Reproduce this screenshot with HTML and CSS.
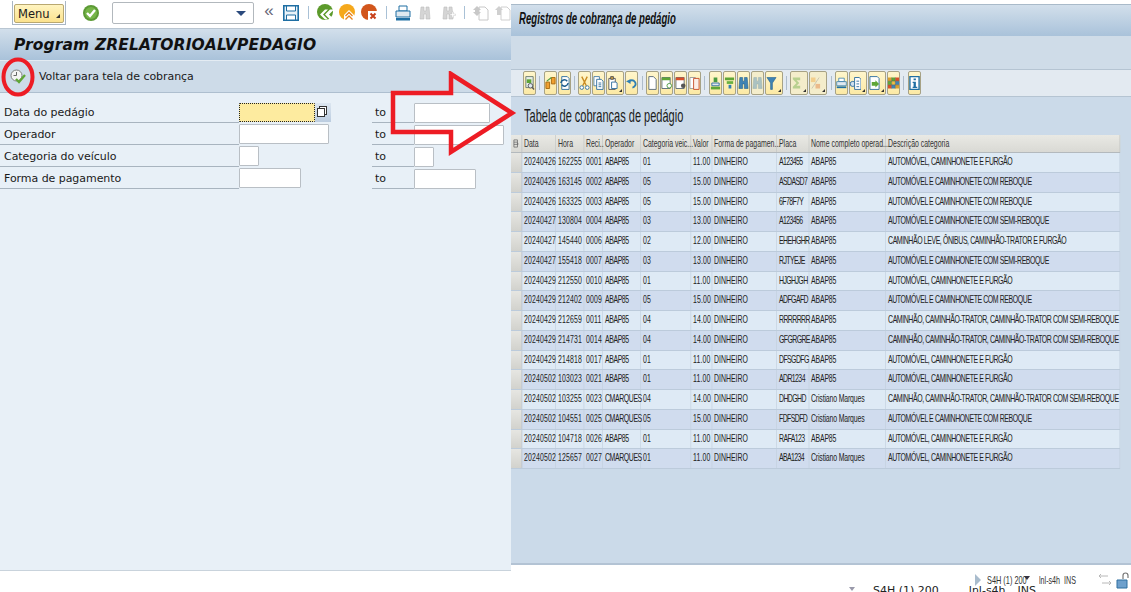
FILE: index.html
```html
<!DOCTYPE html>
<html lang="pt">
<head>
<meta charset="utf-8">
<title>Registros de cobrança de pedágio</title>
<link rel="stylesheet" href="styles.css">
</head>
<body>
<svg class="defs" width="0" height="0" aria-hidden="true">
  <defs>
    <symbol id="i-doc" viewBox="0 0 12 16"><path d="M2 1h5l3 3v11H2z" fill="#fff" stroke="#5a6a78"/></symbol>
    <symbol id="i-docs" viewBox="0 0 12 16"><path d="M1 1h6v10H1z" fill="#fff" stroke="#4b7fa8"/><path d="M4 4h5l2 2v9H4z" fill="#fff" stroke="#2f6f9f"/><path d="M6 8h3M6 10h3M6 12h3" stroke="#2f6f9f"/></symbol>
    <symbol id="i-bino" viewBox="0 0 12 16"><path d="M2 2h3v4h2V2h3l1 12H7V9H5v5H1z" fill="#3f83b4" stroke="#1c5c8c" stroke-width=".6"/></symbol>
  </defs>
</svg>

<main class="page">
  <section class="left">
    <header class="sys">
      <div class="menu-wrap"><button class="menu">Menu<i class="tri"></i></button></div>
      <svg class="okic" viewBox="0 0 18 18"><circle cx="9" cy="9" r="8" fill="#5c9a35"/><circle cx="9" cy="9" r="6" fill="#76b548"/><path d="M5 9l3 3 5-6" fill="none" stroke="#fff" stroke-width="2.4"/></svg>
      <div class="cmd"><i class="cmd-tri"></i></div>
      <span class="chev">«</span>
      <svg class="ic16 save" viewBox="0 0 16 16"><path d="M.8.8h14.4v14.4H.8z" fill="#eaf3f9" stroke="#1f6fa3" stroke-width="1.6"/><path d="M3.5 1v5h9V1z" fill="#fff" stroke="#1f6fa3"/><path d="M3.5 15v-5h9v5z" fill="#fff" stroke="#1f6fa3"/></svg>
      <i class="sep s1"></i>
      <svg class="ic18" viewBox="0 0 18 18"><circle cx="8" cy="8" r="8" fill="#5c9a2b"/><path d="M17 5.5l-5 5 5 5h-4l-5-5 5-5zM11 5.5l-5 5 5 5H8l-5-5 5-5z" fill="#fff"/></svg>
      <svg class="ic18" viewBox="0 0 18 18"><circle cx="8" cy="8" r="8" fill="#f5a81c"/><path d="M5 17V11l5-5 5 5v6z" fill="#fff"/><path d="M6.5 12l3.5-3.5 3.5 3.5M6.5 15.500l3.500-3.500 3.500 3.500" fill="none" stroke="#e8821b" stroke-width="1.300"/></svg>
      <svg class="ic18" viewBox="0 0 18 18"><circle cx="8" cy="8" r="8" fill="#d2561c"/><rect x="7" y="7" width="10" height="10" fill="#fff"/><path d="M9.500 9.500l5 5M14.500 9.500l-5 5" stroke="#c8401a" stroke-width="2"/></svg>
      <i class="sep s2"></i>
      <svg class="ic16 print" viewBox="0 0 16 16"><path d="M4 1h8v5H4z" fill="#fff" stroke="#1f6fa3"/><path d="M1 6h14v6H1z" fill="#dfe9f0" stroke="#1f6fa3"/><path d="M1 13h14v2.500H1z" fill="#1f6fa3"/></svg>
      <svg class="ic16 find" viewBox="0 0 12 16"><path d="M2 2h3v4h2V2h3l1 12H7V9H5v5H1z" fill="#d5d5d5" stroke="#bdbdbd" stroke-width=".6"/></svg>
      <svg class="ic16 find" viewBox="0 0 12 16"><path d="M2 2h3v4h2V2h3l1 12H7V9H5v5H1z" fill="#d5d5d5" stroke="#bdbdbd" stroke-width=".6"/><path d="M8 9h2V7h1.500v2h2v1.500h-2v2H10v-2H8z" fill="#fff" stroke="#bdbdbd" stroke-width=".4"/></svg>
      <i class="sep s3"></i>
      <svg class="ic16 page-ic" viewBox="0 0 16 16"><path d="M6 2h6l3 3v10H6z" fill="#fff" stroke="#c8c8c8"/><path d="M4 1l4 4H6v2h2l-4 4-4-4h2V5H0z" fill="#c8c8c8"/></svg>
      <svg class="ic16 page-ic" viewBox="0 0 16 16"><path d="M6 2h6l3 3v10H6z" fill="#fff" stroke="#d0d0d0"/><path d="M4 1l4 4H6v5H2V5H0z" fill="#d0d0d0"/></svg>
    </header>
    <h1 class="prog">Program ZRELATORIOALVPEDAGIO</h1>
    <div class="apptool">
      <svg class="clockic" viewBox="0 0 16 16"><circle cx="6.500" cy="6.500" r="5.500" fill="#f4f4f4" stroke="#7d7d7d"/><path d="M6.500 3v3.500H3.500" fill="none" stroke="#666"/><path d="M6 10l3 3 6-7" fill="none" stroke="#5fa636" stroke-width="2.300"/></svg>
      <span>Voltar para tela de cobrança</span>
    </div>
    <form class="form">
      <div class="frow">
        <label class="flabel">Data do pedágio</label>
        <div class="low"><span class="inp focus"></span><span class="hlp"><i></i></span></div>
        <span class="to">to</span>
        <span class="inp w76"></span>
      </div>
      <div class="frow">
        <label class="flabel">Operador</label>
        <div class="low"><span class="inp w90"></span></div>
        <span class="to">to</span>
        <span class="inp w90"></span>
      </div>
      <div class="frow">
        <label class="flabel">Categoria do veículo</label>
        <div class="low"><span class="inp w20"></span></div>
        <span class="to">to</span>
        <span class="inp w20"></span>
      </div>
      <div class="frow">
        <label class="flabel">Forma de pagamento</label>
        <div class="low"><span class="inp w62"></span></div>
        <span class="to">to</span>
        <span class="inp w62"></span>
      </div>
    </form>
    <footer class="lfoot"></footer>
  </section>

  <section class="right">
    <h2 class="rtitle"><span>Registros de cobrança de pedágio</span></h2>
    <div class="band"></div>
    <div class="tools">
      <button class="tb"><svg viewBox="0 0 12 16"><path d="M2 1h8v12H2z" fill="#e8efe8" stroke="#6a7a70"/><path d="M3 4h5v4H3z" fill="#5fa636"/><circle cx="7" cy="11" r="2.500" fill="#dfe9f0" stroke="#555"/><path d="M9 13l2 2" stroke="#555" stroke-width="1.500"/></svg></button>
      <i class="tsep"></i>
      <button class="tb"><svg viewBox="0 0 12 16"><path d="M1 7h4v7H1z" fill="#f0a030" stroke="#a86a10"/><path d="M7 2h4v7H7z" fill="#f0a030" stroke="#a86a10"/><path d="M2 6l5-4" stroke="#4a9a40" stroke-width="1.200"/></svg></button>
      <button class="tb"><svg viewBox="0 0 12 16"><path d="M3 1h6l2 2v12H3z" fill="#fff" stroke="#2f6f9f"/><path d="M2 8a4 4 0 0 1 7-2M10 8a4 4 0 0 1-7 2" fill="none" stroke="#1c5c8c" stroke-width="1.600"/></svg></button>
      <i class="tsep"></i>
      <button class="tb"><svg viewBox="0 0 12 16"><path d="M3 1l5 10M9 1L4 11" stroke="#c98a20" stroke-width="1.500"/><circle cx="3" cy="13" r="2" fill="#fff" stroke="#2f6f9f"/><circle cx="9" cy="13" r="2" fill="#fff" stroke="#2f6f9f"/></svg></button>
      <button class="tb"><svg><use href="#i-docs"/></svg></button>
      <button class="tb wide"><svg viewBox="0 0 12 16"><path d="M2 3h7v12H2z" fill="#fff" stroke="#555"/><path d="M4 1h3v3H4z" fill="#cfa040" stroke="#555"/><path d="M5 7h5l1 1v6H5z" fill="#fff" stroke="#2f6f9f"/></svg><i class="dd"></i></button>
      <button class="tb"><svg viewBox="0 0 12 16"><path d="M3 7a4 4 0 1 1 4 6" fill="none" stroke="#2f7fb4" stroke-width="2"/><path d="M0 6l5-2v5z" fill="#2f7fb4"/></svg></button>
      <i class="tsep"></i>
      <button class="tb"><svg><use href="#i-doc"/></svg></button>
      <button class="tb"><svg viewBox="0 0 12 16"><path d="M1 2h9v12H1z" fill="#fff" stroke="#5a6a78"/><path d="M1 2h9v3H1z" fill="#5fa636"/><circle cx="9" cy="11" r="2.500" fill="#fff" stroke="#4a9a40"/></svg></button>
      <button class="tb"><svg viewBox="0 0 12 16"><path d="M1 2h9v12H1z" fill="#fff" stroke="#5a6a78"/><path d="M1 2h9v3H1z" fill="#d8502a"/><circle cx="9" cy="11" r="2.500" fill="#555"/></svg></button>
      <button class="tb"><svg viewBox="0 0 12 16"><path d="M1 2h6v12H1z" fill="#fff" stroke="#9a9a9a"/><path d="M5 3h6v12H5z" fill="#fbeee6" stroke="#c8502a"/></svg></button>
      <i class="tsep"></i>
      <button class="tb"><svg viewBox="0 0 12 16"><path d="M4 2h4v5H4z" fill="#4a9a40"/><path d="M2 8h8v3H2z" fill="#e0e8ee" stroke="#2f6f9f"/><path d="M1 12h10v3H1z" fill="#5fa636"/></svg></button>
      <button class="tb"><svg viewBox="0 0 12 16"><path d="M1 2h10v3H1z" fill="#5fa636"/><path d="M3 6h7v3H3z" fill="#6ab040"/><path d="M5 10h3v4H5z" fill="#2f7fb4"/></svg></button>
      <button class="tb"><svg><use href="#i-bino"/></svg></button>
      <button class="tb off"><svg><use href="#i-bino"/></svg></button>
      <button class="tb wide"><svg viewBox="0 0 12 16"><path d="M1 2h10L7 8v7H5V8z" fill="#3f83b4" stroke="#1c5c8c" stroke-width=".6"/></svg><i class="dd"></i></button>
      <i class="tsep"></i>
      <button class="tb wide off"><svg viewBox="0 0 12 16"><path d="M2 2h8v3H6l3 3-3 3h4v3H2v-2l4-4-4-4z" fill="#5fa636"/></svg><i class="dd"></i></button>
      <button class="tb wide off"><svg viewBox="0 0 12 16"><path d="M1 2h5v5H1z" fill="#f0a030"/><path d="M6 9h5v5H6z" fill="#e0702a"/><path d="M2 14L10 2" stroke="#888"/></svg><i class="dd"></i></button>
      <i class="tsep"></i>
      <button class="tb"><svg viewBox="0 0 16 16"><path d="M4 1h8v5H4z" fill="#fff" stroke="#1f6fa3"/><path d="M1 6h14v6H1z" fill="#dfe9f0" stroke="#1f6fa3"/><path d="M1 13h14v2.500H1z" fill="#1f6fa3"/></svg></button>
      <button class="tb wide"><svg viewBox="0 0 12 16"><circle cx="3" cy="9" r="2.800" fill="#cfe0ee" stroke="#2f6f9f"/><path d="M5 2h5l2 2v11H5z" fill="#fff" stroke="#2f6f9f"/><path d="M7 6h3M7 9h3M7 12h3" stroke="#2f6f9f"/></svg><i class="dd"></i></button>
      <button class="tb wide"><svg viewBox="0 0 12 16"><path d="M1 1h8l2 2v12H1z" fill="#fff" stroke="#2f6f9f"/><path d="M3 7h4V5l4 4-4 4v-2H3z" fill="#5fa636"/></svg><i class="dd"></i></button>
      <button class="tb"><svg viewBox="0 0 12 12" class="grid-ic"><path d="M0 0h4v4H0z" fill="#d8a030"/><path d="M4 0h4v4H4z" fill="#5fa636"/><path d="M8 0h4v4H8z" fill="#d8502a"/><path d="M0 4h4v4H0z" fill="#5fa636"/><path d="M4 4h4v4H4z" fill="#f0c040"/><path d="M8 4h4v4H8z" fill="#3f83b4"/><path d="M0 8h4v4H0z" fill="#d8502a"/><path d="M4 8h4v4H4z" fill="#3f83b4"/><path d="M8 8h4v4H8z" fill="#d8a030"/><path d="M4 0v12M8 0v12M0 4h12M0 8h12" stroke="#555" stroke-width=".5"/></svg></button>
      <i class="tsep"></i>
      <button class="tb"><svg viewBox="0 0 12 16"><path d="M1 1h10v14H1z" fill="#fff" stroke="#1f6fa3" stroke-width="1.500"/><path d="M5 3h2.500v2H5zM4 6.500h3.500V12H9v1.500H4V12h1V8H4z" fill="#1f6fa3"/></svg></button>
    </div>
    <h3 class="ttitle"><span>Tabela de cobranças de pedágio</span></h3>
    <div class="tclip">
      <div class="grid">
        <div class="r head"><b class="sel"><svg viewBox="0 0 10 10"><path d="M1 1h6v8H1zM1 3.500h6M1 6h6" fill="none" stroke="#666"/><path d="M7 4l2 1.500L7 7z" fill="#666"/></svg></b><span>Data</span><span>Hora</span><span>Reci..</span><span>Operador</span><span>Categoria veic...</span><span>Valor</span><span>Forma de pagamen...</span><span>Placa</span><span>Nome completo operad...</span><span>Descrição categoria</span></div>
        <div class="r"><b class="sel"></b><span>20240426</span><span>162255</span><span>0001</span><span>ABAP85</span><span>01</span><span>11.00</span><span>DINHEIRO</span><span>A123455</span><span>ABAP85</span><span>AUTOMÓVEL, CAMINHONETE E FURGÃO</span></div>
        <div class="r"><b class="sel"></b><span>20240426</span><span>163145</span><span>0002</span><span>ABAP85</span><span>05</span><span>15.00</span><span>DINHEIRO</span><span>ASDASD7</span><span>ABAP85</span><span>AUTOMÓVEL E CAMINHONETE COM REBOQUE</span></div>
        <div class="r"><b class="sel"></b><span>20240426</span><span>163325</span><span>0003</span><span>ABAP85</span><span>05</span><span>15.00</span><span>DINHEIRO</span><span>6F78F7Y</span><span>ABAP85</span><span>AUTOMÓVEL E CAMINHONETE COM REBOQUE</span></div>
        <div class="r"><b class="sel"></b><span>20240427</span><span>130804</span><span>0004</span><span>ABAP85</span><span>03</span><span>13.00</span><span>DINHEIRO</span><span>A123456</span><span>ABAP85</span><span>AUTOMÓVEL E CAMINHONETE COM SEMI-REBOQUE</span></div>
        <div class="r"><b class="sel"></b><span>20240427</span><span>145440</span><span>0006</span><span>ABAP85</span><span>02</span><span>12.00</span><span>DINHEIRO</span><span>EHEHGHR</span><span>ABAP85</span><span>CAMINHÃO LEVE, ÔNIBUS, CAMINHÃO-TRATOR E FURGÃO</span></div>
        <div class="r"><b class="sel"></b><span>20240427</span><span>155418</span><span>0007</span><span>ABAP85</span><span>03</span><span>13.00</span><span>DINHEIRO</span><span>RJTYEJE</span><span>ABAP85</span><span>AUTOMÓVEL E CAMINHONETE COM SEMI-REBOQUE</span></div>
        <div class="r"><b class="sel"></b><span>20240429</span><span>212550</span><span>0010</span><span>ABAP85</span><span>01</span><span>11.00</span><span>DINHEIRO</span><span>HJGHJGH</span><span>ABAP85</span><span>AUTOMÓVEL, CAMINHONETE E FURGÃO</span></div>
        <div class="r"><b class="sel"></b><span>20240429</span><span>212402</span><span>0009</span><span>ABAP85</span><span>05</span><span>15.00</span><span>DINHEIRO</span><span>ADFGAFD</span><span>ABAP85</span><span>AUTOMÓVEL E CAMINHONETE COM REBOQUE</span></div>
        <div class="r"><b class="sel"></b><span>20240429</span><span>212659</span><span>0011</span><span>ABAP85</span><span>04</span><span>14.00</span><span>DINHEIRO</span><span>RRRRRRR</span><span>ABAP85</span><span>CAMINHÃO, CAMINHÃO-TRATOR, CAMINHÃO-TRATOR COM SEMI-REBOQUE</span></div>
        <div class="r"><b class="sel"></b><span>20240429</span><span>214731</span><span>0014</span><span>ABAP85</span><span>04</span><span>14.00</span><span>DINHEIRO</span><span>GFGRGRE</span><span>ABAP85</span><span>CAMINHÃO, CAMINHÃO-TRATOR, CAMINHÃO-TRATOR COM SEMI-REBOQUE</span></div>
        <div class="r"><b class="sel"></b><span>20240429</span><span>214818</span><span>0017</span><span>ABAP85</span><span>01</span><span>11.00</span><span>DINHEIRO</span><span>DFSGDFG</span><span>ABAP85</span><span>AUTOMÓVEL, CAMINHONETE E FURGÃO</span></div>
        <div class="r"><b class="sel"></b><span>20240502</span><span>103023</span><span>0021</span><span>ABAP85</span><span>01</span><span>11.00</span><span>DINHEIRO</span><span>ADR1234</span><span>ABAP85</span><span>AUTOMÓVEL, CAMINHONETE E FURGÃO</span></div>
        <div class="r"><b class="sel"></b><span>20240502</span><span>103255</span><span>0023</span><span>CMARQUES</span><span>04</span><span>14.00</span><span>DINHEIRO</span><span>DHDGHD</span><span>Cristiano Marques</span><span>CAMINHÃO, CAMINHÃO-TRATOR, CAMINHÃO-TRATOR COM SEMI-REBOQUE</span></div>
        <div class="r"><b class="sel"></b><span>20240502</span><span>104551</span><span>0025</span><span>CMARQUES</span><span>05</span><span>15.00</span><span>DINHEIRO</span><span>FDFSDFD</span><span>Cristiano Marques</span><span>AUTOMÓVEL E CAMINHONETE COM REBOQUE</span></div>
        <div class="r"><b class="sel"></b><span>20240502</span><span>104718</span><span>0026</span><span>ABAP85</span><span>01</span><span>11.00</span><span>DINHEIRO</span><span>RAFA123</span><span>ABAP85</span><span>AUTOMÓVEL, CAMINHONETE E FURGÃO</span></div>
        <div class="r"><b class="sel"></b><span>20240502</span><span>125657</span><span>0027</span><span>CMARQUES</span><span>01</span><span>11.00</span><span>DINHEIRO</span><span>ABA1234</span><span>Cristiano Marques</span><span>AUTOMÓVEL, CAMINHONETE E FURGÃO</span></div>
      </div>
    </div>
    <div class="rfill"></div>
    <footer class="status">
      <div class="st1">
        <i class="play"></i>
        <span class="sq w-a">S4H (1) 200</span><i class="down"></i>
        <span class="sq w-b">lnl-s4h</span>
        <span class="sq w-c">INS</span>
        <svg class="st-ic" viewBox="0 0 14 14"><path d="M1 3h9M3 1L1 3l2 2M13 10H4M11 8l2 2-2 2" fill="none" stroke="#b8b8b8"/></svg>
        <svg class="st-lock" viewBox="0 0 14 20"><path d="M7 7V3.500a2.500 2.500 0 0 1 5 0V6" fill="none" stroke="#777" stroke-width="1.200"/><path d="M1 8h10v8H1z" fill="#6ea0cc" stroke="#2f6f9f"/></svg>
      </div>
      <div class="st2"><i class="down grey"></i><span>S4H (1) 200</span><span>lnl-s4h</span><span class="st2-ins">INS</span></div>
    </footer>
  </section>

  <svg class="mark arrow" viewBox="0 0 130 90"><path d="M3 22H61V3L122 42 61 81V61H3z" fill="none" stroke="#ed1c24" stroke-width="4.500"/></svg>
  <svg class="mark ring" viewBox="0 0 34 40"><ellipse cx="17" cy="20" rx="14.500" ry="17.500" fill="none" stroke="#ed1c24" stroke-width="4"/></svg>
</main>
</body>
</html>
```
FILE: styles.css
```css
* { box-sizing: border-box; }
html, body { margin: 0; height: 100%; background: #fff; overflow: hidden; }
.defs { position: absolute; }
.page { position: relative; display: flex; width: 1131px; height: 592px; font-family: "DejaVu Sans", sans-serif; color: #1a1a1a; }

/* left window */
.left { width: 511px; flex: none; display: flex; flex-direction: column; overflow: hidden; }
.sys { height: 29px; flex: none; display: flex; align-items: center; background: #fff; border-bottom: 1px solid #b9c6d2; padding-left: 12px; }
.menu-wrap { width: 54px; height: 24px; flex: none; margin-top: -3px; padding: 2px 1px; border: 1px solid #a9b6c4; border-top: 0; }
.menu { position: relative; width: 50px; height: 19px; padding: 0 0 0 3px; text-align: left; font: 11.500px "DejaVu Sans", sans-serif; color: #1a1a1a; background: linear-gradient(#fff4c0, #fbe28e); border: 1px solid #b9a870; border-radius: 2px; }
.tri { position: absolute; right: 3px; bottom: 4px; border-left: 4px solid transparent; border-bottom: 4px solid #333; }
.okic { width: 18px; height: 18px; flex: none; margin: -3px 0 0 16px; }
.cmd { position: relative; width: 142px; height: 22px; flex: none; margin: -3px 0 0 12px; border: 1px solid #b2b8bd; border-radius: 2px; background: #fff; }
.cmd-tri { position: absolute; right: 7px; top: 8px; border: 5px solid transparent; border-top: 5px solid #2b4a7d; border-bottom: 0; }
.chev { width: 20px; flex: none; margin: -6px 0 0 5px; font: 17px "Liberation Sans", sans-serif; color: #667; text-align: center; }
.ic16 { width: 16px; height: 16px; flex: none; margin-top: -3px; }
.ic18 { width: 18px; height: 18px; flex: none; margin: -3px 4px 0 0; }
.save { margin-left: 4px; }
.sep { width: 1px; height: 13px; margin-top: -3px; background: #a9c1d6; flex: none; }
.s1 { margin: -3px 8px 0 9px; }
.s2 { margin: -3px 8px 0 3px; }
.s3 { margin: -3px 8px 0 1px; }
.print { margin-right: 6px; }
.find { margin-right: 7px; }
.page-ic { margin-right: 6px; }
.prog { margin: 0; height: 31px; flex: none; padding: 3px 0 0 14px; font: italic bold 15.5px/26px "DejaVu Sans", sans-serif; letter-spacing: .12px; color: #111; background: linear-gradient(#d2dfeb, #a9c2da); }
.apptool { height: 33px; flex: none; display: flex; align-items: center; gap: 13px; padding-left: 10px; font-size: 11px; letter-spacing: -.06px; background: #cddbe8; border-top: 1px solid #e4ecf3; border-bottom: 1px solid #aebfcf; }
.clockic { width: 16px; height: 16px; }
.form { flex: 1; background: #e8f0f7; padding-top: 8px; display: flex; flex-direction: column; border-bottom: 1px solid #c9d3dc; }
.frow { display: grid; grid-template-columns: 239px 133px 42px auto; height: 22px; align-items: end; justify-items: start; }
.flabel { width: 100%; height: 20px; padding-left: 4px; font-size: 11px; line-height: 19px; letter-spacing: -.05px; border-bottom: 1px solid #a8b4bf; }
.low { display: flex; align-items: flex-end; height: 22px; padding-bottom: 1px; }
.to { width: 100%; height: 20px; padding-left: 3px; font-size: 11px; line-height: 19px; border-bottom: 1px solid #a8b4bf; }
.inp { display: block; height: 20px; background: #fff; border: 1px solid #b9bfc5; border-radius: 1px; }
.focus { width: 76px; height: 19px; background: #fdeb9f; border: 1px dotted #222; }
.hlp { display: block; width: 16px; height: 19px; background: linear-gradient(#dce6f0, #bccde0); position: relative; }
.hlp i { position: absolute; left: 2px; top: 5px; width: 8px; height: 9px; background: #fff; border: 1px solid #333; box-shadow: 2px -2px 0 -1px #fff, 2px -2px 0 0 #333; }
.w76 { width: 76px; }
.w90 { width: 90px; }
.w20 { width: 20px; }
.w62 { width: 62px; }
.lfoot { height: 21px; flex: none; background: #fff; }

/* right window */
.right { flex: 1; width: 620px; margin-top: 4px; display: flex; flex-direction: column; overflow: hidden; background: #cbdae9; border-top: 1px solid #a9bac9; }
.rtitle { margin: 0; height: 31px; flex: none; padding: 1px 0 0 8px; background: linear-gradient(#d2dfeb, #a9c2da); overflow: hidden; }
.rtitle span { display: block; white-space: nowrap; font: italic bold 16px/26px "Liberation Sans", sans-serif; transform: scaleX(.6); transform-origin: 0 50%; color: #111; }
.band { height: 34px; flex: none; background: #cfdce8; border-bottom: 1px solid #b5c4d2; }
.tools { height: 27px; flex: none; display: flex; align-items: center; gap: 1px; padding-left: 12px; background: #e3eaf1; border-bottom: 1px solid #b5c4d2; }
.tb { position: relative; width: 13px; height: 24px; flex: none; padding: 0; display: flex; align-items: center; background: linear-gradient(#fff6cc, #fce9a4); border: 1px solid #a7a285; border-radius: 2px; }
.tb svg { width: 11px; height: 16px; display: block; }
.tb.wide { width: 18px; }
.tb.off svg { opacity: .4; }
.tb.off { background: #f4edcb; }
.dd { position: absolute; right: 1px; bottom: 2px; border-left: 3px solid transparent; border-bottom: 3px solid #333; }
.tsep { width: 1px; height: 14px; margin: 0 2.330px; flex: none; background: #aebccb; }
.ttitle { margin: 0; height: 38px; flex: none; padding-left: 13px; background: #cbdae9; overflow: hidden; }
.ttitle span { display: block; white-space: nowrap; font: 400 19px/38px "Liberation Sans", sans-serif; transform: scaleX(.58); transform-origin: 0 50%; color: #1a1a1a; }
.tclip { height: 335px; flex: none; overflow: hidden; }
.grid { width: 922.7px; transform: scaleX(.66); transform-origin: 0 0; font: 10.500px "Liberation Sans", sans-serif; color: #222; }
.r { display: grid; grid-template-columns: 16.7px 51.5px 42.4px 28.800px 57.600px 75.800px 31.800px 98.500px 48.500px 116.700px 354.500px; height: 19.75px; background: #deeaf5; border-bottom: 1px solid #bccbdb; }
.r:nth-child(odd) { background: #d0dcee; }
.r span { padding-left: 3px; line-height: 17px; white-space: nowrap; border-right: 1.500px solid #c2d0de; }
.r:not(.head) span:nth-child(-n+4), .r:not(.head) span:nth-child(6), .r:not(.head) span:nth-child(7) { letter-spacing: .2px; }
.r:not(.head) span:nth-child(5), .r:not(.head) span:nth-child(11) { letter-spacing: -.6px; }
.r:not(.head) span:nth-child(9) { letter-spacing: -.9px; }
.r:not(.head) span:nth-child(10) { letter-spacing: -.25px; }
.head { height: 18px; background: linear-gradient(#e9e9e4, #d9d9d4); border-bottom: 1px solid #b3b9bd; }
.r.head:nth-child(odd) { background: linear-gradient(#e9e9e4, #d9d9d4); }
.head span { line-height: 17px; color: #333; border-right-color: #c3c6c4; }
.sel { display: block; background: linear-gradient(#e6e6e2, #d2d2cd); border-right: 1.500px solid #b8bcbf; }
.head .sel { display: flex; align-items: center; justify-content: center; background: none; }
.sel svg { width: 12px; height: 9px; }
.rfill { flex: 1; background: #cbdae9; border-bottom: 2px solid #b3c3d4; }
.status { height: 27px; flex: none; background: #fff; position: relative; overflow: hidden; font: 11.500px "Liberation Sans", sans-serif; color: #333; }
.st1 { display: flex; align-items: center; height: 16px; margin-top: 7px; padding-left: 464px; }
.play { width: 0; height: 0; flex: none; border-left: 6px solid #a9bccd; border-top: 6px solid transparent; border-bottom: 6px solid transparent; }
.sq { display: block; flex: none; white-space: nowrap; transform-origin: 0 50%; }
.w-a { width: 37px; margin-left: 6px; transform: scaleX(.64); }
.down { flex: none; margin: 0 0 4px 0; border: 3px solid transparent; border-top: 4px solid #334; border-bottom: 0; }
.w-b { width: 18px; margin-left: 9px; transform: scaleX(.62); }
.w-c { width: 11px; margin-left: 7px; transform: scaleX(.62); }
.st-ic { width: 14px; height: 14px; flex: none; margin-left: 23px; }
.st-lock { width: 14px; height: 20px; flex: none; margin: 3px 0 0 4px; }
.st2 { position: absolute; left: 338px; top: 19px; display: flex; align-items: flex-start; gap: 30px; font: 11px "DejaVu Sans", sans-serif; color: #222; white-space: nowrap; }
.st2-ins { margin-left: -18px; }
.down.grey { margin: 3px -12px 0 0; border-top-color: #99a; }

/* annotations */
.mark { position: absolute; }
.arrow { left: 390px; top: 71px; width: 130px; height: 90px; }
.ring { left: 1px; top: 57px; width: 34px; height: 40px; }
```
